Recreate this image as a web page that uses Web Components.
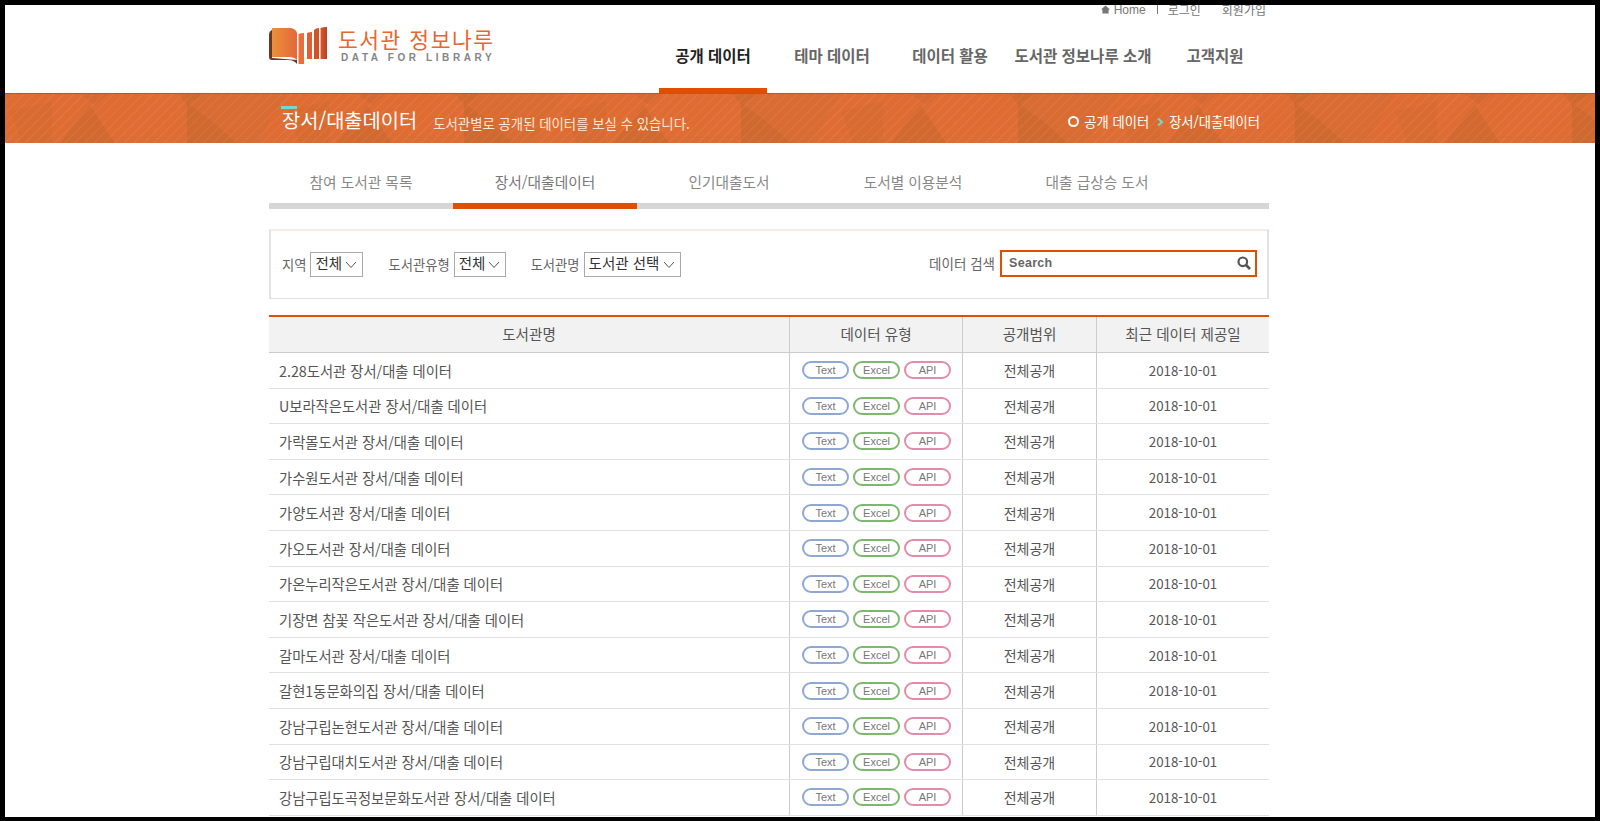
<!DOCTYPE html>
<html lang="ko">
<head>
<meta charset="utf-8">
<title>장서/대출데이터</title>
<style>
	html, body { margin: 0; height: 100%; overflow: hidden; background: #000; }
	body { font-family: 'Noto Sans CJK KR', 'Noto Sans', sans-serif; color: #555; }
	#frame { margin: 5px; height: 812px; background: #fff; overflow: hidden; }
	#content { width: 1000px; margin-left: 264px; }
</style>
</head>
<body>
<div id="frame">
	<site-header></site-header>
	<page-banner title="장서/대출데이터" sub="도서관별로 공개된 데이터를 보실 수 있습니다." crumb="공개 데이터" current="장서/대출데이터"></page-banner>
	<div id="content">
		<tab-strip>
			<tab-item>참여 도서관 목록</tab-item>
			<tab-item active>장서/대출데이터</tab-item>
			<tab-item>인기대출도서</tab-item>
			<tab-item>도서별 이용분석</tab-item>
			<tab-item>대출 급상승 도서</tab-item>
		</tab-strip>
		<filter-panel>
			<filter-select label="지역" value="전체" width="53" gap="0"></filter-select>
			<filter-select label="도서관유형" value="전체" width="52" gap="25"></filter-select>
			<filter-select label="도서관명" value="도서관 선택" width="97" gap="25"></filter-select>
		</filter-panel>
		<data-table>
			<lib-row>2.28도서관 장서/대출 데이터</lib-row>
			<lib-row>U보라작은도서관 장서/대출 데이터</lib-row>
			<lib-row>가락몰도서관 장서/대출 데이터</lib-row>
			<lib-row>가수원도서관 장서/대출 데이터</lib-row>
			<lib-row>가양도서관 장서/대출 데이터</lib-row>
			<lib-row>가오도서관 장서/대출 데이터</lib-row>
			<lib-row>가온누리작은도서관 장서/대출 데이터</lib-row>
			<lib-row>기장면 참꽃 작은도서관 장서/대출 데이터</lib-row>
			<lib-row>갈마도서관 장서/대출 데이터</lib-row>
			<lib-row>갈현1동문화의집 장서/대출 데이터</lib-row>
			<lib-row>강남구립논현도서관 장서/대출 데이터</lib-row>
			<lib-row>강남구립대치도서관 장서/대출 데이터</lib-row>
			<lib-row>강남구립도곡정보문화도서관 장서/대출 데이터</lib-row>
		</data-table>
	</div>
</div>
<script>
class SiteHeader extends HTMLElement {
	connectedCallback() {
		this.attachShadow({ mode: 'open' })
		this.shadowRoot.innerHTML = `
		<style>
			:host { display: block; width: 1000px; height: 88px; margin-left: 264px; }
			.util { display: flex; justify-content: flex-end; align-items: center; height: 9px; line-height: 9px;
				font-size: 12px; color: #777; padding-right: 3px; }
			.util svg { margin-right: 4px; }
			.util .home { font-family: 'Liberation Sans', sans-serif; position: relative; top: 1px; }
			.util .sep { margin: 0 10px 0 11px; width: 1px; height: 9px; background: #777; }
			.util .join { margin-left: 21px; }
			.main { display: flex; justify-content: space-between; height: 79px; }
			.logo { display: flex; margin-top: 13px; height: 40px; }
			.names { margin-left: 11px; }
			.kr { font-size: 21.5px; line-height: 23px; color: #e8672e; letter-spacing: 1.5px; white-space: nowrap; }
			.en { font: 700 10px/12px 'Liberation Sans', sans-serif; color: #858585; letter-spacing: 3.6px;
				white-space: nowrap; margin: 2px 0 0 3px; }
			nav { display: flex; align-self: flex-end; margin-right: 2px; }
			nav a { box-sizing: border-box; height: 55px; line-height: 34px; text-align: center; font-size: 15.5px;
				font-weight: 700; color: #666; border-bottom: 5px solid transparent; white-space: nowrap; }
			nav a.on { color: #222; border-color: #e04e00; }
		</style>
		<div class="util">
			<svg width="9" height="9" viewBox="0 0 9 9"><path d="M4.5 0.5 9 4.6H7.6V8.5H1.4V4.6H0Z" fill="#777"/></svg>
			<span class="home">Home</span><span class="sep"></span><span>로그인</span><span class="join">회원가입</span>
		</div>
		<div class="main">
			<div class="logo">
				<svg width="58" height="38" viewBox="0 0 58 38">
					<defs>
						<linearGradient id="pg" x1="0" x2="1" y1="0" y2="0">
							<stop offset="0" stop-color="#e9913a"/><stop offset="1" stop-color="#e5673a"/>
						</linearGradient>
						<linearGradient id="bar" x1="0" x2="1" y1="0" y2="0">
							<stop offset="0" stop-color="#d8582e"/><stop offset="1" stop-color="#b5411f"/>
						</linearGradient>
					</defs>
					<path d="M3 3Q0 4 0 8V30Q0 33 3 33H19Q25 33 28 37V33L3 31Z" fill="#6b3826"/>
					<path d="M3 1H22Q27 2 28 6V33Q25 30 20 30H3Z" fill="url(#pg)"/>
					<path d="M29.5 7Q32 6 35 6V37H29.5Z" fill="#ea6d3c"/>
					<path d="M38 6Q40 5 43 5V32H38Z" fill="#df5f30"/>
					<path d="M45 3Q47 1 50 1V32H45Z" fill="#cf5228"/>
					<path d="M51.5 1Q54 0 58 0V32H51.5Z" fill="url(#bar)"/>
				</svg>
				<div class="names">
					<div class="kr">도서관 정보나루</div>
					<div class="en">DATA FOR LIBRARY</div>
				</div>
			</div>
			<nav>
				<a class="on" style="width:108px">공개 데이터</a>
				<a style="width:130px">테마 데이터</a>
				<a style="width:106px">데이터 활용</a>
				<a style="width:160px">도서관 정보나루 소개</a>
				<a style="width:104px">고객지원</a>
			</nav>
		</div>
		`;
	}
}
window.customElements.define('site-header', SiteHeader)

class PageBanner extends HTMLElement {
	connectedCallback() {
		let title = this.getAttribute('title');
		let sub = this.getAttribute('sub');
		let crumb = this.getAttribute('crumb');
		let current = this.getAttribute('current');
		this.attachShadow({ mode: 'open' })
		this.shadowRoot.innerHTML = `
		<style>
			:host { display: block; position: relative; height: 50px; background: #df6d33; color: #fff; overflow: hidden; }
			svg.bg { position: absolute; left: 0; top: 0; }
			.inner { position: relative; display: flex; align-items: center; box-sizing: border-box; width: 1000px; height: 50px;
				margin-left: 264px; padding: 5px 9px 0 13px; }
			h1 { position: relative; top: -1px; margin: 0; font-size: 19.8px; font-weight: 400; white-space: nowrap; }
			h1::before { content: ''; position: absolute; left: -1px; top: 1px; width: 16px; height: 3px; background: #72d8d0; }
			.sub { margin-left: 16px; font-size: 13.4px; color: #fbe6d8; white-space: nowrap; position: relative; top: 2px; }
			.crumb { margin-left: auto; display: flex; align-items: center; font-size: 13.3px; white-space: nowrap; position: relative; top: 1px; }
			.ring { box-sizing: border-box; width: 11px; height: 11px; border: 2.5px solid #fff; border-radius: 50%; margin-right: 5px; }
			.crumb svg { margin: 0 6px 0 8px; }
		</style>
		<svg class="bg" width="1590" height="50" viewBox="0 0 1590 50">
			<defs>
				<pattern id="tile" width="277" height="50" patternUnits="userSpaceOnUse" x="182">
					<path d="M0 0H100L70 50H0Z" fill="#d26a30" opacity=".45"/>
					<path d="M0 10V50H50L25 28Z" fill="#c8652c" opacity=".55"/>
					<path d="M0 0V12L20 0ZM267 0 277 12V0Z" fill="#c8652c" opacity=".5"/>
					<path d="M100 18 142 8V50H112Z" fill="#c8652c" opacity=".25"/>
					<path d="M180 12 205 50H150L165 30Z" fill="#c8652c" opacity=".5"/>
					<path d="M168 0H200L185 12Z" fill="#c8652c" opacity=".4"/>
				</pattern>
				<pattern id="hatch" width="7" height="7" patternUnits="userSpaceOnUse" patternTransform="rotate(45)">
					<rect width="1" height="7" fill="#fff" opacity=".07"/>
				</pattern>
			</defs>
			<rect width="1590" height="50" fill="url(#tile)"/>
			<rect width="1590" height="50" fill="url(#hatch)"/>
			<rect width="1590" height="1" fill="#d2500f"/>
		</svg>
		<div class="inner">
			<h1>${title}</h1>
			<span class="sub">${sub}</span>
			<div class="crumb">
				<span class="ring"></span>${crumb}
				<svg width="6" height="8" viewBox="0 0 6 8"><path d="M1 0.5 5 4 1 7.5" fill="none" stroke="#72d8d0" stroke-width="2"/></svg>
				${current}
			</div>
		</div>
		`;
	}
}
window.customElements.define('page-banner', PageBanner)

class TabStrip extends HTMLElement {
	connectedCallback() {
		this.attachShadow({ mode: 'open' })
		this.shadowRoot.innerHTML = `
		<style>
			:host { display: flex; margin-top: 16px; height: 44px; border-bottom: 6px solid #d6d6d6; }
		</style>
		<slot></slot>
		`;
	}
}
window.customElements.define('tab-strip', TabStrip)

class TabItem extends HTMLElement {
	connectedCallback() {
		this.attachShadow({ mode: 'open' })
		this.shadowRoot.innerHTML = `
		<style>
			:host { display: block; box-sizing: content-box; width: 184px; height: 44px; line-height: 46px; text-align: center;
				font-size: 14.7px; color: #888; white-space: nowrap; }
			:host([active]) { border-bottom: 6px solid #e04e00; color: #777; }
		</style>
		<slot></slot>
		`;
	}
}
window.customElements.define('tab-item', TabItem)

class FilterPanel extends HTMLElement {
	connectedCallback() {
		this.attachShadow({ mode: 'open' })
		this.shadowRoot.innerHTML = `
		<style>
			:host { display: flex; align-items: center; box-sizing: border-box; height: 70px; margin-top: 20px;
				padding: 0 10px 0 11px; border: 2px solid #e2e2e2; border-top-color: #f6ebe5; border-bottom-width: 1px; }
			.search { margin-left: auto; display: flex; align-items: center; font-size: 13.5px; color: #666; margin-top: -3px; }
			.box { display: flex; align-items: center; justify-content: space-between; box-sizing: border-box; width: 257px; height: 27px;
				margin-left: 5px; padding: 0 4px 0 7px; border: 2px solid #e04e00;
				font: 700 12.5px 'Liberation Sans', sans-serif; color: #666; letter-spacing: .3px; }
		</style>
		<slot></slot>
		<div class="search">데이터 검색
			<div class="box">Search
				<svg width="14" height="14" viewBox="0 0 14 14"><circle cx="5.8" cy="5.8" r="4.3" fill="none" stroke="#555" stroke-width="2.2"/><path d="M9 9 13 13" stroke="#555" stroke-width="2.6"/></svg>
			</div>
		</div>
		`;
	}
}
window.customElements.define('filter-panel', FilterPanel)

class FilterSelect extends HTMLElement {
	connectedCallback() {
		let label = this.getAttribute('label');
		let value = this.getAttribute('value');
		let width = this.getAttribute('width');
		let gap = this.getAttribute('gap');
		this.attachShadow({ mode: 'open' })
		this.shadowRoot.innerHTML = `
		<style>
			:host { display: flex; align-items: center; margin-left: ${gap}px; font-size: 13.3px; color: #666; white-space: nowrap; }
			.sel { display: flex; justify-content: space-between; box-sizing: border-box; width: ${width}px; height: 25px; margin-left: 4px;
				padding: 0 5px 0 4px; border: 1px solid #a9a9a9; line-height: 19px; font-size: 14.5px; color: #333; }
			svg { margin-top: 8px; }
		</style>
		${label}
		<div class="sel">${value}
			<svg width="12" height="8" viewBox="0 0 12 8"><path d="M1 1 6 6.5 11 1" fill="none" stroke="#555"/></svg>
		</div>
		`;
	}
}
window.customElements.define('filter-select', FilterSelect)

class DataTable extends HTMLElement {
	connectedCallback() {
		this.attachShadow({ mode: 'open' })
		this.shadowRoot.innerHTML = `
		<style>
			:host { display: block; margin-top: 16px; border-top: 2px solid #e04e00; }
			.head { display: grid; grid-template-columns: 520px 173px 134px 173px; height: 36px; line-height: 34px; box-sizing: border-box;
				background: #f2f2f2; border-bottom: 1px solid #ccc; text-align: center; font-size: 14.6px; color: #555; }
			.head div + div { border-left: 1px solid #ccc; }
		</style>
		<div class="head"><div>도서관명</div><div>데이터 유형</div><div>공개범위</div><div>최근 데이터 제공일</div></div>
		<slot></slot>
		`;
	}
}
window.customElements.define('data-table', DataTable)

class TypePill extends HTMLElement {
	connectedCallback() {
		let color = this.getAttribute('color');
		this.attachShadow({ mode: 'open' })
		this.shadowRoot.innerHTML = `
		<style>
			:host { display: flex; align-items: center; justify-content: center; box-sizing: border-box; width: 47px; height: 18px;
				border: 2px solid ${color}; border-radius: 9px; font: 11px 'Liberation Sans', sans-serif; color: #777; }
		</style>
		<slot></slot>
		`;
	}
}
window.customElements.define('type-pill', TypePill)

class LibRow extends HTMLElement {
	connectedCallback() {
		this.attachShadow({ mode: 'open' })
		this.shadowRoot.innerHTML = `
		<style>
			:host { display: grid; grid-template-columns: 520px 173px 134px 173px; box-sizing: border-box; height: 35.6px;
				border-bottom: 1px solid #e0e0e0; font-size: 14px; color: #555; }
			.cell { display: flex; align-items: center; justify-content: center; white-space: nowrap; }
			.cell + .cell { border-left: 1px solid #ccc; }
			.name { justify-content: flex-start; padding-left: 10px; font-size: 14.3px; }
			.types { justify-content: flex-start; gap: 4px; padding-left: 12px; }
			.date { font-size: 13.3px; }
		</style>
		<div class="cell name"><slot></slot></div>
		<div class="cell types">
			<type-pill color="#8fa7d3">Text</type-pill>
			<type-pill color="#7cb96c">Excel</type-pill>
			<type-pill color="#e68aa9">API</type-pill>
		</div>
		<div class="cell">전체공개</div>
		<div class="cell date">2018-10-01</div>
		`;
	}
}
window.customElements.define('lib-row', LibRow)
</script>
</body>
</html>
